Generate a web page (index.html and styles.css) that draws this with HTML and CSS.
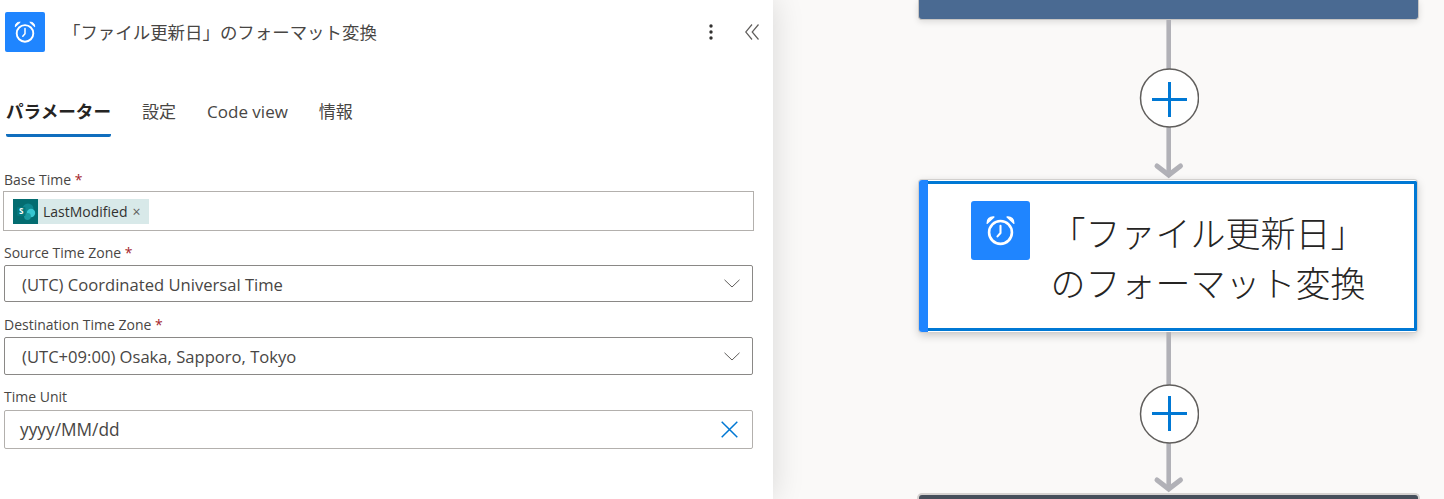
FILE: index.html
```html
<!DOCTYPE html>
<html>
<head>
  <meta charset="UTF-8">
  <link rel="stylesheet" href="styles.css">
</head>
<body>
  <svg class="defs" width="0" height="0">
    <symbol id="alarm" viewBox="0 0 24 24">
      <circle cx="12" cy="13.400" r="8.300" fill="none" stroke="#fff" stroke-width="1.900"/>
      <path d="M12 8.500v5.300l-2.200 2.500" fill="none" stroke="#fff" stroke-width="1.500" stroke-linecap="round" stroke-linejoin="round"/>
      <path d="M2.300 6.800C2 4 4.200 1.900 7.200 2.200ZM21.700 6.800C22 4 19.800 1.900 16.800 2.200Z" fill="#fff" stroke="#fff" stroke-width="1" stroke-linejoin="round"/>
    </symbol>
    <symbol id="edge-a" viewBox="0 0 60 160">
      <path d="M29.700 0V155" stroke="#b1b1b7" stroke-width="4.600" fill="none"/>
      <path d="M18 146 29.700 155 41.500 146" stroke="#b1b1b7" stroke-width="5" stroke-linecap="round" fill="none"/>
      <circle cx="30.500" cy="78" r="29" fill="#fff" stroke="#605e5c" stroke-width="1.500"/>
      <path d="M30.500 62V97M13 79.500H48" stroke="#0078d4" stroke-width="3" fill="none"/>
    </symbol>
    <symbol id="edge-b" viewBox="0 0 60 161">
      <path d="M29.700 0V157" stroke="#b1b1b7" stroke-width="4.600" fill="none"/>
      <path d="M18 148 29.700 157 41.500 148" stroke="#b1b1b7" stroke-width="5" stroke-linecap="round" fill="none"/>
      <circle cx="30.500" cy="82" r="29" fill="#fff" stroke="#605e5c" stroke-width="1.500"/>
      <path d="M30.500 64V99M13 81.500H48" stroke="#0078d4" stroke-width="3" fill="none"/>
    </symbol>
  </svg>

  <div class="page">
    <div class="panel">
      <div class="panel-header">
        <div class="panel-icon"><svg width="24" height="24"><use href="#alarm"/></svg></div>
        <div class="panel-title">「ファイル更新日」のフォーマット変換</div>
        <svg class="more" width="4" height="16" viewBox="0 0 4 16">
          <circle cx="2" cy="2" r="1.700"/><circle cx="2" cy="8" r="1.700"/><circle cx="2" cy="14" r="1.700"/>
        </svg>
        <svg class="collapse" width="14" height="16" viewBox="0 0 14 16">
          <path d="M7 .5 .7 8 7 15.500M13.500 .5 7.200 8 13.500 15.500"/>
        </svg>
      </div>

      <div class="tabs">
        <div class="tab active">パラメーター</div>
        <div class="tab">設定</div>
        <div class="tab">Code view</div>
        <div class="tab">情報</div>
      </div>

      <div class="form">
        <div class="field field-base">
          <label>Base Time <span class="req">*</span></label>
          <div class="box box-token">
            <span class="token">
              <span class="token-icon">
                <svg width="25" height="25" viewBox="0 0 25 25">
                  <rect width="25" height="25" fill="#036c70"/>
                  <circle cx="15" cy="10" r="5.500" fill="#0f878f"/>
                  <circle cx="18" cy="14" r="4.200" fill="#37c6d0"/>
                  <circle cx="14.500" cy="17.500" r="3.400" fill="#1a9ba1"/>
                  <rect x="4" y="8" width="8.500" height="9" rx="1" fill="#03787c"/>
                  <text x="8.200" y="15.200" class="token-s">S</text>
                </svg>
              </span>
              <span class="token-text">LastModified</span>
              <span class="token-x">×</span>
            </span>
          </div>
        </div>

        <div class="field field-source">
          <label>Source Time Zone <span class="req">*</span></label>
          <div class="box box-select">
            <span class="value">(UTC) Coordinated Universal Time</span>
            <svg class="chevron" width="16" height="9" viewBox="0 0 16 9"><path d="M.5 .8 8 8 15.500 .8"/></svg>
          </div>
        </div>

        <div class="field field-dest">
          <label>Destination Time Zone <span class="req">*</span></label>
          <div class="box box-select">
            <span class="value">(UTC+09:00) Osaka, Sapporo, Tokyo</span>
            <svg class="chevron" width="16" height="9" viewBox="0 0 16 9"><path d="M.5 .8 8 8 15.500 .8"/></svg>
          </div>
        </div>

        <div class="field field-unit">
          <label>Time Unit</label>
          <div class="box box-text">
            <span class="value value-text">yyyy/MM/dd</span>
            <svg class="clear" width="17" height="17" viewBox="0 0 17 17"><path d="M.7 .7 16.300 16.300M16.300 .7 .7 16.300"/></svg>
          </div>
        </div>
      </div>
    </div>

    <div class="canvas">
      <div class="card card-top"></div>
      <svg class="edge" width="60" height="160"><use href="#edge-a"/></svg>
      <div class="card-selected">
        <div class="card-bar"></div>
        <div class="card-body">
          <div class="card-icon"><svg width="33" height="33"><use href="#alarm"/></svg></div>
          <div class="card-title">「ファイル更新日」<br>のフォーマット変換</div>
        </div>
      </div>
      <svg class="edge" width="60" height="161"><use href="#edge-b"/></svg>
      <div class="card card-bottom"></div>
    </div>
  </div>
</body>
</html>
```

FILE: styles.css
```css
html, body {
  margin: 0;
  height: 100%;
  overflow: hidden;
}

body {
  font-family: "Open Sans", "Noto Sans CJK JP", sans-serif;
  color: #323130;
  background: #faf9f8;
}

.defs {
  position: absolute;
}

.page {
  display: flex;
  height: 499px;
}

/* 左パネル */
.panel {
  width: 773px;
  flex: none;
  background: #fff;
  box-shadow: 0 0 30px rgba(0, 0, 0, 0.14);
  position: relative;
  z-index: 1;
}

.panel-header {
  display: flex;
  align-items: center;
  padding: 12px 14px 0 5px;
  height: 40px;
}

.panel-icon {
  width: 40px;
  height: 40px;
  background: #1f85ff;
  border-radius: 2px;
  display: flex;
  align-items: center;
  justify-content: center;
}

.panel-title {
  flex: 1;
  margin: -2px 0 0 18px;
  font-size: 17.450px;
  color: #484644;
  font-family: "Noto Sans CJK JP", sans-serif;
}

.more {
  fill: #323130;
  margin-right: 32px;
}

.collapse {
  fill: none;
  stroke: #605e5c;
  stroke-width: 1.200;
}

.tabs {
  display: flex;
  gap: 31px;
  margin-top: 34px;
  padding-left: 6px;
}

.tab {
  height: 51px;
  line-height: 51px;
  font-size: 17px;
  color: #484644;
  box-sizing: border-box;
}

.tab.active {
  font-size: 17.600px;
  font-weight: 700;
  color: #252423;
  border-bottom: 3px solid #106ebe;
  border-radius: 0 0 2px 2px;
}

.form {
  padding: 34px 0 0 3px;
}

.field label {
  display: block;
  font-size: 14px;
  line-height: 18px;
  color: #484644;
  margin: 0 0 3px 1px;
}

.req {
  color: #a4262c;
}

.box {
  box-sizing: border-box;
  border: 1px solid #a19f9d;
  display: flex;
  align-items: center;
  background: #fff;
  border-radius: 2px;
}

.box-token {
  width: 751px;
  height: 40px;
  padding-left: 9px;
  border-radius: 0;
  border-color: #b3b0ad;
}

.box-select {
  width: 749px;
  margin-left: 1px;
  padding: 0 12px 0 16px;
  border-color: #8a8886;
  justify-content: space-between;
}

.box-text {
  width: 749px;
  height: 39px;
  margin-left: 1px;
  padding: 0 14px 0 15px;
  border-color: #b3b0ad;
  justify-content: space-between;
}

.field-base label {
  margin-bottom: 2px;
}

.field-source {
  margin-top: 13px;
}

.field-source .box {
  height: 37px;
}

.field-dest {
  margin-top: 14px;
}

.field-dest .box {
  height: 38px;
}

.field-unit {
  margin-top: 13px;
}

.field-unit label {
  margin-bottom: 4px;
}

.token {
  display: flex;
  align-items: center;
  height: 25px;
  background: #d8e9e9;
  padding-right: 8px;
  font-size: 14px;
}

.token-icon {
  height: 25px;
}

.token-s {
  font: 700 8px "Open Sans", sans-serif;
  fill: #fff;
  text-anchor: middle;
}

.token-text {
  margin: 1px 0 0 5px;
}

.token-x {
  margin-left: 5px;
  color: #605e5c;
}

.value {
  font-size: 16.600px;
  color: #484644;
  margin: 1px 0 0 1px;
}

.value-text {
  font-size: 17.300px;
  margin: 0;
}

.chevron {
  fill: none;
  stroke: #605e5c;
  stroke-width: 1;
}

.clear {
  fill: none;
  stroke: #0078d4;
  stroke-width: 1.500;
}

/* 右キャンバス */
.canvas {
  flex: 1;
  display: flex;
  flex-direction: column;
  padding-left: 145px;
}

.card {
  box-sizing: border-box;
  width: 501px;
  border: 1px solid #c8c6c4;
  flex: none;
}

.card-top {
  height: 20px;
  background: #4a6a92;
  border-top: 0;
  border-radius: 0 0 4px 4px;
  box-shadow: 0 2px 6px rgba(0, 0, 0, 0.12);
}

.card-bottom {
  width: 503px;
  height: 10px;
  margin-left: -1px;
  background: #464f5b;
  border: 2px solid #d6d3d1;
  border-bottom: 0;
  border-radius: 5px 5px 0 0;
}

.edge {
  display: block;
  flex: none;
  margin-left: 221px;
}

.card-selected {
  width: 498px;
  height: 152px;
  margin-left: 1px;
  flex: none;
  display: flex;
  background: #fff;
  border-radius: 3px;
  box-shadow: 0 0 0 1px #d2d0ce, 0 3px 10px rgba(0, 0, 0, 0.22);
}

.card-bar {
  width: 9px;
  flex: none;
  background: #1f85ff;
  border-radius: 3px 0 0 3px;
}

.card-body {
  flex: 1;
  box-sizing: border-box;
  display: flex;
  margin: 1px 0;
  border: 3px solid #0078d4;
  border-left: 0;
  border-radius: 0 2px 2px 0;
  padding: 17px 0 0 43px;
}

.card-icon {
  width: 59px;
  height: 59px;
  background: #1f85ff;
  border-radius: 3px;
  display: flex;
  align-items: center;
  justify-content: center;
  flex: none;
}

.card-title {
  flex: 1;
  margin: 6px 48px 0 20px;
  font-family: "Noto Sans CJK JP", sans-serif;
  font-size: 35px;
  font-weight: 300;
  line-height: 50px;
  color: #252423;
  text-align: center;
  white-space: nowrap;
}
```
